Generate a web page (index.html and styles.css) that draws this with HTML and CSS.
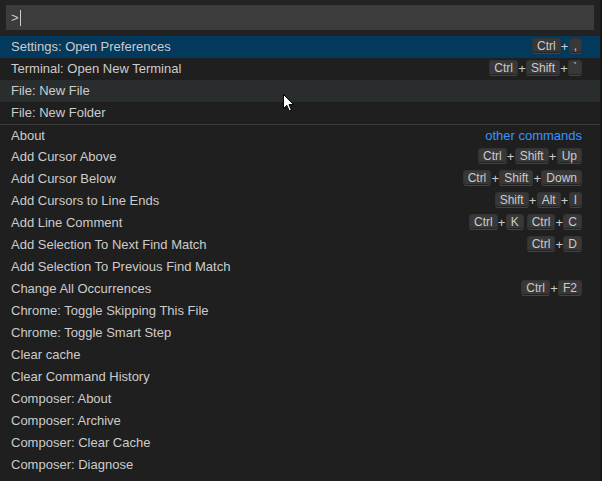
FILE: index.html
```html
<!DOCTYPE html>
<html>
<head>
<meta charset="utf-8">
<link rel="stylesheet" href="styles.css">
</head>
<body>
<div class="widget">
  <div class="header">
    <div class="input"><span class="prompt">&gt;</span><span class="caret"></span></div>
  </div>
  <div class="list">
    <div class="row selected"><span class="label">Settings: Open Preferences</span><span class="keys"><kbd>Ctrl</kbd><i>+</i><kbd>,</kbd></span></div>
    <div class="row"><span class="label">Terminal: Open New Terminal</span><span class="keys"><kbd>Ctrl</kbd><i>+</i><kbd>Shift</kbd><i>+</i><kbd>`</kbd></span></div>
    <div class="row hover"><span class="label">File: New File</span></div>
    <div class="row"><span class="label">File: New Folder</span></div>
    <div class="row separator"><span class="label">About</span><span class="group">other commands</span></div>
    <div class="row"><span class="label">Add Cursor Above</span><span class="keys"><kbd>Ctrl</kbd><i>+</i><kbd>Shift</kbd><i>+</i><kbd>Up</kbd></span></div>
    <div class="row"><span class="label">Add Cursor Below</span><span class="keys"><kbd>Ctrl</kbd><i>+</i><kbd>Shift</kbd><i>+</i><kbd>Down</kbd></span></div>
    <div class="row"><span class="label">Add Cursors to Line Ends</span><span class="keys"><kbd>Shift</kbd><i>+</i><kbd>Alt</kbd><i>+</i><kbd>I</kbd></span></div>
    <div class="row"><span class="label">Add Line Comment</span><span class="keys"><kbd>Ctrl</kbd><i>+</i><kbd>K</kbd><b></b><kbd>Ctrl</kbd><i>+</i><kbd>C</kbd></span></div>
    <div class="row"><span class="label">Add Selection To Next Find Match</span><span class="keys"><kbd>Ctrl</kbd><i>+</i><kbd>D</kbd></span></div>
    <div class="row"><span class="label">Add Selection To Previous Find Match</span></div>
    <div class="row"><span class="label">Change All Occurrences</span><span class="keys"><kbd>Ctrl</kbd><i>+</i><kbd>F2</kbd></span></div>
    <div class="row"><span class="label">Chrome: Toggle Skipping This File</span></div>
    <div class="row"><span class="label">Chrome: Toggle Smart Step</span></div>
    <div class="row"><span class="label">Clear cache</span></div>
    <div class="row"><span class="label">Clear Command History</span></div>
    <div class="row"><span class="label">Composer: About</span></div>
    <div class="row"><span class="label">Composer: Archive</span></div>
    <div class="row"><span class="label">Composer: Clear Cache</span></div>
    <div class="row"><span class="label">Composer: Diagnose</span></div>
  </div>
</div>
<svg class="pointer" width="14" height="20" viewBox="0 0 14 20"><path d="M1.5 1.5 L1.5 15.5 L4.8 12.4 L7.3 18 L9.4 17.1 L7 11.6 L11.5 11.6 Z" fill="#fff" stroke="#000" stroke-width="1"/></svg>
</body>
</html>
```
FILE: styles.css
```css
html, body {
  margin: 0;
  padding: 0;
  background: #181818;
  overflow: hidden;
  height: 481px;
}
body {
  font-family: "Liberation Sans", Arial, sans-serif;
  font-size: 13px;
  color: #cccccc;
}
.widget {
  width: 600px;
  height: 481px;
  background: #1f1f1f;
  overflow: hidden;
}
.header {
  height: 36px;
  padding: 5px 6px 0 6px;
  box-sizing: border-box;
  background: #222222;
}
.input {
  height: 25px;
  background: #3c3c3c;
  display: flex;
  align-items: center;
  padding-left: 5px;
  color: #cccccc;
}
.prompt {
  line-height: 25px;
}
.caret {
  width: 1px;
  height: 16px;
  background: #cccccc;
  margin-left: 1px;
}
.list {
  display: flex;
  flex-direction: column;
}
.row {
  height: 22px;
  box-sizing: border-box;
  display: flex;
  align-items: center;
  justify-content: space-between;
  padding: 0 18px 2px 11px;
  white-space: nowrap;
}
.row.selected {
  background: #04395e;
}
.row.hover {
  background: #2a2d2e;
}
.row.separator {
  border-top: 1px solid #3c3c3c;
  padding-bottom: 0;
}
.group {
  color: #3794ff;
}
.keys {
  display: flex;
  align-items: center;
}
.keys i {
  font-style: normal;
  font-size: 13px;
  width: 8px;
  text-align: center;
}
.keys b {
  width: 3px;
}
kbd {
  font-family: "Liberation Sans", Arial, sans-serif;
  font-size: 12px;
  height: 14px;
  line-height: 14px;
  padding: 0 4px;
  background: #383838;
  border: 1px solid #333333;
  border-bottom-color: #444444;
  box-shadow: inset 0 -1px 0 rgba(0,0,0,0.36);
  border-radius: 3px;
  color: #cccccc;
  display: inline-block;
}
.pointer {
  position: absolute;
  left: 282px;
  top: 93px;
}
```
